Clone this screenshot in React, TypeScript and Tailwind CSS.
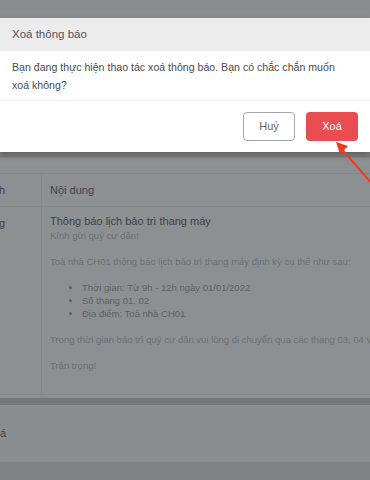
import React from 'react'

const font = { fontFamily: '"Liberation Sans", Arial, sans-serif' }

function Arrow() {
  return (
    <svg className="absolute z-20 left-[328px] top-[136px]" width="42" height="52" viewBox="0 0 42 52">
      <line x1="12" y1="11" x2="46" y2="50" stroke="#f2391d" strokeWidth="2" />
      <polygon points="8,6 20,10 12,18" fill="#f2391d" />
    </svg>
  )
}

export default function App() {
  return (
    <div className="relative w-[370px] h-[480px] overflow-hidden bg-[#8d9093]" style={font}>
      {/* backdrop strip above the modal */}
      <div className="h-[18px] bg-[#8a8d90]" />

      {/* Modal */}
      <div className="bg-white shadow-[0_3px_6px_rgba(0,0,0,0.25)] relative z-10">
        <div className="h-[33px] bg-[#ececec] flex items-center px-3 text-[11.5px] text-[#555459]">
          Xoá thông báo
        </div>
        <div className="px-3 pt-[7px] pb-[6px] border-b border-[#f0f0f0] text-[10.6px] leading-[18px] text-[#4a4a4f] whitespace-nowrap">
          Bạn đang thực hiện thao tác xoá thông báo. Bạn có chắc chắn muốn
          <br />
          xoá không?
        </div>
        <div className="h-[51px] flex items-center justify-end gap-[11px] pr-3">
          <button className="w-[52px] h-[29px] rounded-[4px] border border-[#a7a7a7] text-[11px] text-[#666]">
            Huỷ
          </button>
          <button className="w-[52px] h-[29px] rounded-[4px] bg-[#e84d51] text-[11px] text-white">
            Xoá
          </button>
        </div>
      </div>

      {/* Dimmed page behind */}
      <div className="h-[5px] bg-[#7d8083]" />
      <div className="h-[16px] border-t border-[#84878a]" />
      <div className="border-t border-[#85888b]">
        <div className="flex h-[33px] border-b border-[#85888b] text-[11px] text-[#3f4246]">
          <div className="w-[42px] overflow-hidden border-r border-[#85888b] flex items-center">
            <span className="ml-[-7px]">nh</span>
          </div>
          <div className="flex-1 flex items-center pl-[8px]">Nội dung</div>
        </div>
        <div className="flex h-[188px] border-b border-[#85888b]">
          <div className="w-[42px] overflow-hidden border-r border-[#85888b] pt-[8px] text-[11px] text-[#3f4246]">
            <span className="ml-[-7px]">ng</span>
          </div>
          <div className="flex-1 pl-[8px] pt-[7px] whitespace-nowrap overflow-hidden">
            <div className="text-[11px] leading-[15px] text-[#3d4044]">Thông báo lịch bảo trì thang máy</div>
            <div className="text-[9.5px] leading-[13px] text-[#6c6f73]">
              <div>Kính gửi quý cư dân!</div>
              <div className="mt-[13px]">Toà nhà CH01 thông báo lịch bảo trì thang máy định kỳ cụ thể như sau:</div>
              <ul className="mt-[13px] list-disc pl-[32px] text-[#5c5f63]">
                <li>Thời gian: Từ 9h - 12h ngày 01/01/2022</li>
                <li>Số thang 01, 02</li>
                <li>Địa điểm: Toà nhà CH01</li>
              </ul>
              <div className="mt-[13px]">Trong thời gian bảo trì quý cư dân vui lòng di chuyển qua các thang 03, 04 và 05</div>
              <div className="mt-[13px]">Trân trọng!</div>
            </div>
          </div>
        </div>
      </div>
      <div className="h-[3px]" />
      <div className="h-[7px] bg-[#75787b]" />
      <div className="h-[57px] bg-[#8b8e91] flex items-center overflow-hidden text-[11px] text-[#3f4246]">
        <span className="ml-[-8px]">Đá</span>
      </div>
      <div className="h-[30px] bg-[#7f8285]" />

      <Arrow />
    </div>
  )
}
